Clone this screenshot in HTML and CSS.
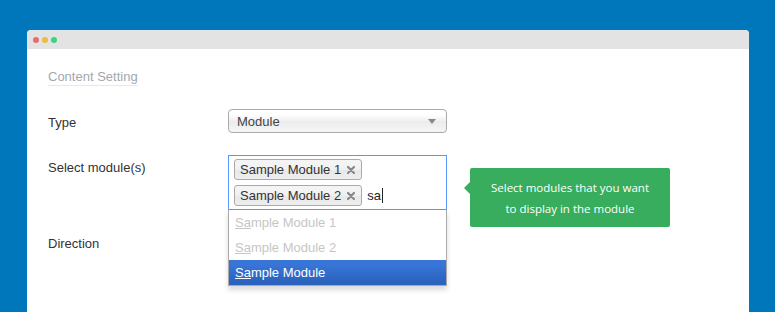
FILE: index.html
```html
<!DOCTYPE html>
<html lang="en">
<head>
    <meta charset="UTF-8">
    <title>Content Setting</title>
    <link rel="stylesheet" href="styles.css">
</head>
<body>

    <div class="window">
        <div class="titlebar">
            <span class="dot red"></span>
            <span class="dot yellow"></span>
            <span class="dot green"></span>
        </div>

        <div class="content">
            <h3 class="section-title">Content Setting</h3>

            <div class="row row-type">
                <label class="label">Type</label>
                <div class="select">
                    <span>Module</span>
                    <span class="caret"></span>
                </div>
            </div>

            <div class="row row-modules">
                <label class="label">Select module(s)</label>
                <div class="multi">
                    <div class="multi-box">
                        <span class="tag">Sample Module 1
                            <svg class="close" viewBox="0 0 10 10"><path d="M2 2L8 8M8 2L2 8"/></svg>
                        </span>
                        <span class="tag-line">
                            <span class="tag">Sample Module 2
                                <svg class="close" viewBox="0 0 10 10"><path d="M2 2L8 8M8 2L2 8"/></svg>
                            </span>
                            <span class="typed">sa<i class="cursor"></i></span>
                        </span>
                    </div>
                    <ul class="results">
                        <li class="muted"><u>Sa</u>mple Module 1</li>
                        <li class="muted"><u>Sa</u>mple Module 2</li>
                        <li class="active"><u>Sa</u>mple Module</li>
                    </ul>
                </div>
                <div class="tip">Select modules that you want<br>to display in the module</div>
            </div>

            <div class="row row-direction">
                <label class="label">Direction</label>
            </div>
        </div>
    </div>

</body>
</html>
```

FILE: styles.css
```css
body {
    margin: 0;
    background-color: #0077ba;
    font-family: "Liberation Sans", Arial, sans-serif;
    overflow: hidden;
}
.window {
    margin: 30px 0 0 27px;
    width: 722px;
    height: 282px;
    background: white;
    border-radius: 4px 4px 0 0;
    overflow: hidden;
}
.titlebar {
    height: 19px;
    background-color: #e3e3e3;
    display: flex;
    align-items: center;
    gap: 3px;
    padding-left: 6px;
}
.dot {
    width: 6px;
    height: 6px;
    border-radius: 50%;
}
.dot.red { background-color: #ea6b6b; }
.dot.yellow { background-color: #e5bf40; }
.dot.green { background-color: #3dd47f; }

.content {
    padding: 18px 21px 0;
}
.section-title {
    display: inline-block;
    margin: 0;
    font-size: 13px;
    font-weight: normal;
    line-height: 16px;
    color: #a3a7ae;
    border-bottom: 1px solid #e8e8e8;
}
.row {
    display: flex;
    align-items: flex-start;
    height: 24px;
    margin-top: 22px;
}
.row-type {
    margin-top: 23px;
}
.row-modules {
    height: 55px;
}
.label {
    width: 180px;
    flex-shrink: 0;
    font-size: 13px;
    line-height: 26px;
    color: #333;
}
.row-type .label {
    line-height: 28px;
}
.row-direction .label {
    line-height: 24px;
}

.select {
    box-sizing: border-box;
    width: 219px;
    height: 24px;
    border: 1px solid #aaa;
    border-radius: 4px;
    background: linear-gradient(#ffffff 20%, #f0f0f0 50%, #ececec 52%, #f6f6f6);
    display: flex;
    align-items: center;
    justify-content: space-between;
    padding: 0 10px 0 8px;
    font-size: 13px;
    color: #444;
}
.caret {
    width: 0;
    height: 0;
    border-left: 4px solid transparent;
    border-right: 4px solid transparent;
    border-top: 5px solid #888;
}

.multi {
    position: relative;
    width: 219px;
    flex-shrink: 0;
}
.multi-box {
    box-sizing: border-box;
    height: 55px;
    border: 1px solid #5897fb;
    padding: 3px 5px 0;
    display: flex;
    flex-direction: column;
    align-items: flex-start;
    gap: 5px;
}
.tag-line {
    display: flex;
    align-items: center;
    gap: 5px;
}
.tag {
    box-sizing: border-box;
    height: 21px;
    display: inline-flex;
    align-items: center;
    gap: 5px;
    padding: 0 5px 0 5px;
    border: 1px solid #aaa;
    border-radius: 3px;
    background: linear-gradient(#f4f4f4 20%, #f0f0f0 50%, #e8e8e8 52%, #eeeeee);
    font-size: 13px;
    color: #333;
}
.close {
    width: 10px;
    height: 10px;
    fill: none;
    stroke: #888;
    stroke-width: 2.2;
    stroke-linecap: round;
}
.typed {
    font-size: 13px;
    color: #222;
    display: inline-flex;
    align-items: center;
}
.cursor {
    display: inline-block;
    width: 1px;
    height: 15px;
    background: #222;
    margin-left: 1px;
}
.results {
    position: absolute;
    top: 55px;
    left: 0;
    right: 0;
    margin: 0;
    padding: 0;
    list-style: none;
    background: white;
    border: 1px solid #aaa;
    border-top: none;
    box-shadow: 0 4px 5px rgba(0, 0, 0, 0.15);
}
.results li {
    height: 25px;
    line-height: 25px;
    padding-left: 6px;
    font-size: 13px;
}
.results li.muted {
    color: #c6c6c6;
}
.results li.active {
    color: white;
    background: linear-gradient(#3875d7 20%, #2a62bc 90%);
}

.tip {
    position: relative;
    flex-shrink: 0;
    margin: 13px 0 0 23px;
    width: 200px;
    height: 59px;
    box-sizing: border-box;
    padding: 9px 0 0;
    background-color: #38ad5e;
    border-radius: 2px;
    color: white;
    font-family: "Open Sans", sans-serif;
    font-size: 11.5px;
    line-height: 21px;
    text-align: center;
    white-space: nowrap;
}
.tip::before {
    content: "";
    position: absolute;
    left: -6px;
    top: 14px;
    border-top: 6px solid transparent;
    border-bottom: 6px solid transparent;
    border-right: 6px solid #38ad5e;
}
```
